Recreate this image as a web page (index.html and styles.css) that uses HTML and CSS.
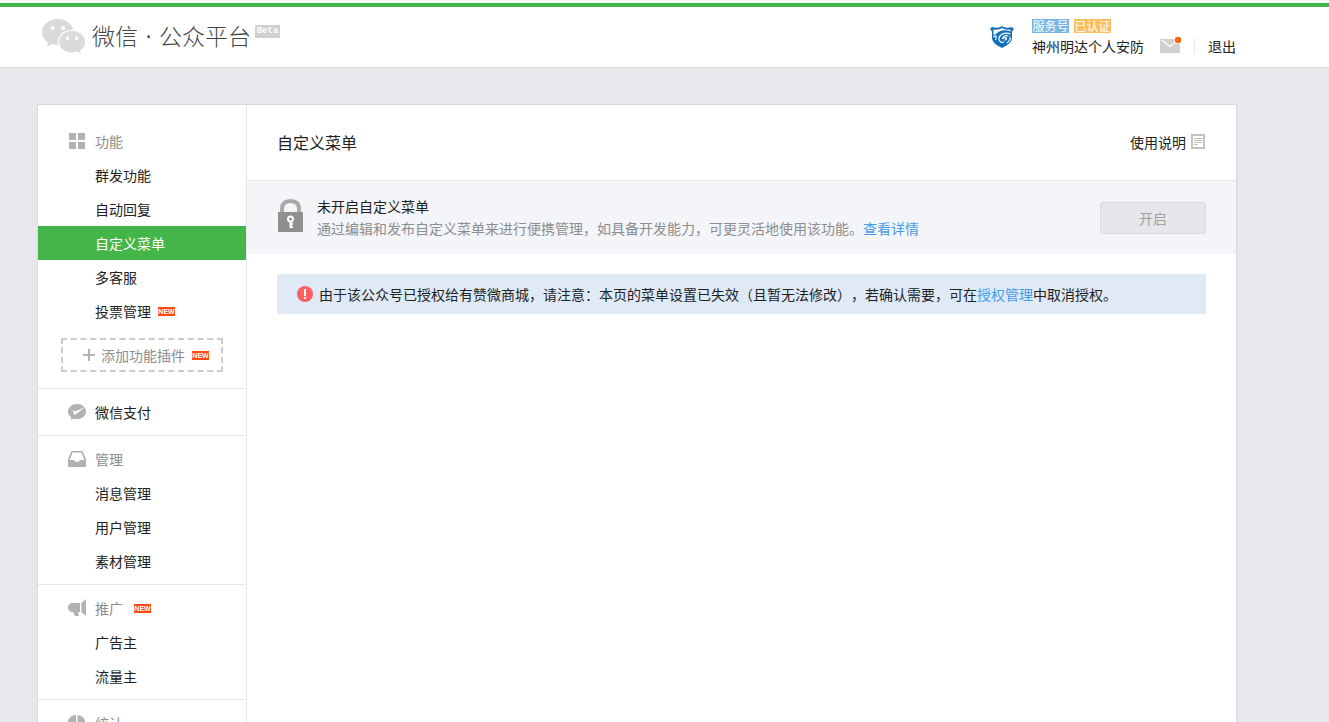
FILE: index.html
```html
<!DOCTYPE html>
<html lang="zh-CN">
<head>
<meta charset="utf-8">
<title>微信公众平台</title>
<link rel="stylesheet" href="styles.css">
</head>
<body>
<header class="topbar">
  <a class="brand" href="#">
    <svg class="brand-icon" width="44" height="36" viewBox="0 0 44 36" aria-hidden="true">
      <path fill="#d9dbda" d="M16 1C7 1 0 7 0 14C0 18.500 2.500 22 6 24.500L5 28.500L10.500 26C12.500 26.700 14.500 27 16.500 27C25 27 31.500 21 31.500 14C31.500 7 24.500 1 16 1Z"/>
      <path fill="#d9dbda" stroke="#fff" stroke-width="1.200" d="M30 12.500C22.500 12.500 16.500 17.500 16.500 24C16.500 30.500 22.500 35 30 35C31.800 35 33.400 34.700 35 34.200L39.600 36L38.600 32.700C41.600 30.700 43.600 27.800 43.600 24C43.600 17.500 37.500 12.500 30 12.500Z"/>
      <g fill="#fff"><circle cx="10.500" cy="10" r="2"/><circle cx="21" cy="10" r="2"/><circle cx="25.500" cy="20.500" r="1.700"/><circle cx="34.500" cy="20.500" r="1.700"/></g>
    </svg>
    <span class="brand-name"><span>微信</span><span class="brand-dot">·</span><span>公众平台</span></span>
    <span class="beta">Beta</span>
  </a>
  <div class="account">
    <svg class="avatar" width="24" height="24" viewBox="0 0 24 24" aria-hidden="true">
      <path fill="#1670b8" d="M12 1C9.500 3 6 3 2 2L0 4L2 6.500V10C1 17 6 20 12 23C18 20 23 17 22 10V6.500L24 4L22 2C18 3 14.500 3 12 1Z"/>
      <path fill="#fff" d="M3.500 4.500C7 5 10 4.500 12 3C14 4.500 17 5 20.500 4.500V6.500C14 4 9 6 6 9L3.500 10Z"/>
      <path fill="none" stroke="#fff" stroke-width="1.200" d="M3.500 12C6 9.500 7 11 5.500 15M20.500 9C15 7 10 9 9 13C8.500 16 11 18 14 17M18.500 11C15 10 13 11 12.500 13.500L16 12.500C17 14 16 15 14.500 15M20 12C20.500 14 19 16.500 17 18"/>
    </svg>
    <div class="identity">
      <div class="tags"><span class="tag tag-blue">服务号</span><span class="tag tag-orange">已认证</span></div>
      <div class="account-row">
        <a href="#">神州明达个人安防</a>
        <a class="mail" href="#" aria-label="消息">
          <svg width="22" height="18" viewBox="0 0 22 18"><path fill="#d0d0d0" d="M0 3H20V17H0Z"/><path fill="none" stroke="#fff" stroke-width="1.200" d="M1.500 4L10 10.500L18.500 4"/><circle cx="18" cy="4" r="4" fill="#fff"/><circle cx="18" cy="4" r="3.200" fill="#ff6600"/></svg>
        </a>
        <a class="logout" href="#">退出</a>
      </div>
    </div>
  </div>
</header>

<div class="panel">
  <nav class="side">
    <section class="group group-first">
      <h2 class="group-title"><svg width="18" height="18" viewBox="0 0 18 18" fill="#b2b2b2"><path d="M1 1H8V8H1ZM10 1H17V8H10ZM1 10H8V17H1ZM10 10H17V17H10Z"/></svg>功能</h2>
      <a class="item" href="#">群发功能</a>
      <a class="item" href="#">自动回复</a>
      <a class="item item-active" href="#">自定义菜单</a>
      <a class="item" href="#">多客服</a>
      <a class="item" href="#">投票管理<span class="new">NEW</span></a>
      <a class="plugin" href="#"><svg width="12" height="12" viewBox="0 0 12 12"><path stroke="#b2b2b2" stroke-width="2" d="M0 6H12M6 0V12"/></svg>添加功能插件<span class="new">NEW</span></a>
    </section>
    <section class="group">
      <a class="group-title group-link" href="#"><svg width="18" height="18" viewBox="0 0 18 18"><path fill="#b2b2b2" d="M9 1C4 1 0 4.200 0 8.500C0 11 1.300 13.200 3.300 14.500L3 17L6 15.700C7 16 8 16.100 9 16.100C14 16.100 18 12.800 18 8.500C18 4.200 14 1 9 1Z"/><path fill="#fff" d="M4.500 7L7 8.500L16.500 4.500L7.500 11.500Q6.500 12 6 11Z"/></svg>微信支付</a>
    </section>
    <section class="group">
      <h2 class="group-title"><svg width="18" height="18" viewBox="0 0 18 18" fill="#b2b2b2"><path fill-rule="evenodd" d="M3.500 1H14.500L18 9V17H0V9ZM4.600 2.500L1.700 10H6Q6.500 12 9 12Q11.500 12 12 10H16.300L13.400 2.500Z"/></svg>管理</h2>
      <a class="item" href="#">消息管理</a>
      <a class="item" href="#">用户管理</a>
      <a class="item" href="#">素材管理</a>
    </section>
    <section class="group">
      <h2 class="group-title"><svg width="18" height="18" viewBox="0 0 18 18" fill="#b2b2b2"><path d="M3.500 4H12V13H10L11 17H7L5 13H3.500Q0 12 0 8.500Q0 5 3.500 4ZM13.300 4L18 0V17L13.300 13Z"/></svg>推广<span class="new new-title">NEW</span></h2>
      <a class="item" href="#">广告主</a>
      <a class="item" href="#">流量主</a>
    </section>
    <section class="group">
      <h2 class="group-title"><svg width="18" height="18" viewBox="0 0 18 18" fill="#b2b2b2"><path d="M8 1V9.500L14 15.500A8.500 8.500 0 1 1 8 1ZM9.500 1A8.500 8.500 0 0 1 17.500 8.500H9.500ZM10.500 10H17.500Q17 13 15 14.500Z"/></svg>统计</h2>
    </section>
  </nav>

  <main class="main">
    <div class="main-head">
      <h1>自定义菜单</h1>
      <a class="help" href="#">使用说明<svg width="14" height="15" viewBox="0 0 14 15"><path fill="none" stroke="#c3c3c3" stroke-width="2" d="M1 1H13V14H1Z"/><path stroke="#c3c3c3" d="M3 4.500H11M3 6.500H11M3 8.500H11M3 10.500H7"/></svg></a>
    </div>
    <div class="status">
      <svg class="lock" width="26" height="34" viewBox="0 0 26 34" aria-hidden="true"><path fill="none" stroke="#a9a9a9" stroke-width="4" d="M5 14V11C5 5 8.500 3 13.500 3S22 5 22 11V14"/><path fill="#8f8f8f" d="M1 14H26V34H1Z"/><circle cx="13.500" cy="21" r="2.500" fill="none" stroke="#fff" stroke-width="2"/><path fill="#fff" d="M12.500 23H14.500V25H16V27H14.500V28H16V30H12.500Z"/></svg>
      <div class="status-text">
        <strong>未开启自定义菜单</strong>
        <p>通过编辑和发布自定义菜单来进行便携管理，如具备开发能力，可更灵活地使用该功能。<a href="#">查看详情</a></p>
      </div>
      <button class="enable" type="button" disabled>开启</button>
    </div>
    <div class="alert" role="alert">
      <svg width="16" height="16" viewBox="0 0 16 16" aria-hidden="true"><circle cx="8" cy="8" r="8" fill="#fa6062"/><path fill="#fff" d="M7 3H9V10H7ZM7 11H9V13H7Z"/></svg>
      <p>由于该公众号已授权给有赞微商城，请注意：本页的菜单设置已失效（且暂无法修改），若确认需要，可在<a href="#">授权管理</a>中取消授权。</p>
    </div>
  </main>
</div>
</body>
</html>
```
FILE: styles.css
```css
* { box-sizing: border-box; }

body {
  display: flex;
  flex-direction: column;
  height: 100vh;
  margin: 0;
  overflow: hidden;
  background: #e7e8eb;
  color: #222;
  font: 14px/22px "Noto Sans CJK SC", sans-serif;
  text-spacing-trim: space-all;
}

h1, h2, p { margin: 0; font-weight: 400; }
a { color: inherit; text-decoration: none; }
svg { display: block; flex: none; }

.topbar {
  display: flex;
  flex: none;
  justify-content: space-between;
  margin-top: 3px;
  padding: 0 93px 0 42px;
  height: 65px;
  background: #fff;
  border-top: 4px solid #44b549;
  border-bottom: 1px solid #d9dadc;
  box-shadow: 0 -3px #f9f9f9, inset 0 1px #fff;
}

.brand { display: flex; align-items: flex-start; padding-top: 11px; color: #444; }
.brand-name { display: flex; margin-left: 6px; font-size: 23px; line-height: 34px; font-weight: 300; }
.brand-dot { width: 21px; font-family: "Liberation Sans", sans-serif; text-align: center; }
.beta {
  margin: 7px 0 0 4px;
  width: 25px;
  background: #d0d0d0;
  color: #fff;
  font: bold 9px/13px "Liberation Mono", monospace;
  text-align: center;
}

.account { display: flex; gap: 18px; padding-top: 12px; }
.avatar { margin-top: 6px; }
.tags { display: flex; gap: 5px; }
.tag { width: 37px; color: #fff; font-size: 12px; line-height: 14px; text-align: center; }
.tag-blue { background: #7ab6e4; }
.tag-orange { background: #fbbe5c; }
.account-row { display: flex; align-items: center; margin-top: 2px; }
.mail { margin: 0 12px 0 16px; padding-bottom: 2px; }
.logout { padding-left: 13px; border-left: 1px solid #e7e7eb; line-height: 16px; }

.panel {
  display: flex;
  flex: 1 0 auto;
  margin: 36px 92px 0 37px;
  background: #fff;
  border: 1px solid #d9dadc;
  border-bottom: 0;
}

.side { flex: none; width: 209px; border-right: 1px solid #e7e7eb; }
.group { padding: 6px 0; border-bottom: 1px solid #e7e7eb; }
.group-first { padding-top: 19px; }
.group-title {
  display: flex;
  align-items: center;
  gap: 9px;
  padding-left: 30px;
  height: 34px;
  color: #8d8d8d;
  font-size: 14px;
}
.group-link { color: #222; }
.item { display: flex; align-items: center; padding-left: 57px; height: 34px; }
.item-active { background: #44b549; color: #fff; }
.plugin {
  display: flex;
  align-items: center;
  margin: 10px 23px;
  padding-left: 20px;
  height: 34px;
  border: 2px dashed #ccc;
  color: #8d8d8d;
}
.plugin svg { margin-right: 6px; }
.new {
  margin-left: 7px;
  width: 17px;
  background: #ff4a14;
  color: #fff;
  font: bold 7px/9px "Liberation Sans", sans-serif;
  text-align: center;
}
.new-title { margin-left: 2px; }

.main { flex: 1; min-width: 0; }
.main-head {
  display: flex;
  align-items: center;
  justify-content: space-between;
  padding: 0 31px 2px 30px;
  height: 76px;
  border-bottom: 1px solid #e7e7eb;
}
.main-head h1 { font-size: 16px; }
.help { display: flex; align-items: center; gap: 5px; }

.status {
  display: flex;
  align-items: center;
  gap: 14px;
  padding: 14px 30px;
  background: #f4f5f9;
}
.lock { margin-bottom: 5px; }
.status-text { flex: 1; min-width: 0; padding-bottom: 1px; }
.status-text strong { display: block; font-weight: 400; }
.status-text p { color: #8d8d8d; }
.status-text a, .alert a { color: #459ae9; }
.enable {
  width: 106px;
  height: 32px;
  padding: 0;
  background: #e7e7eb;
  border: 1px solid #d9dadc;
  border-radius: 3px;
  color: #a3a3a3;
  font: inherit;
}

.alert {
  display: flex;
  align-items: center;
  gap: 6px;
  margin: 20px 30px;
  padding: 9px 20px;
  background: #dfeaf6;
}
```
